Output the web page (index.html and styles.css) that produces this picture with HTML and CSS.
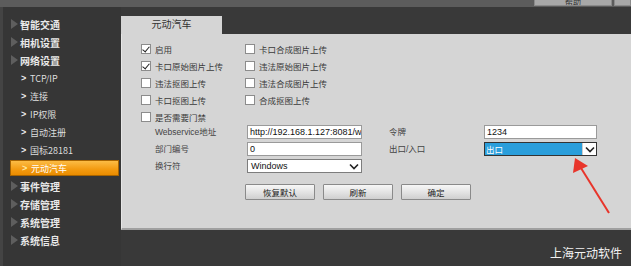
FILE: index.html
```html
<!DOCTYPE html>
<html lang="zh">
<head>
<meta charset="utf-8">
<link rel="stylesheet" href="styles.css">
</head>
<body>
<div class="page">
  <div class="topbar">
    <div class="topbtn">帮助</div>
    <div class="topbtn small"></div>
  </div>
  <div class="main">
    <nav class="sidebar">
      <div class="nav-item top"><span class="tri"></span>智能交通</div>
      <div class="nav-item top"><span class="tri"></span>相机设置</div>
      <div class="nav-item top"><span class="tri"></span>网络设置</div>
      <div class="nav-item sub"><span class="chev">&gt;</span>TCP/IP</div>
      <div class="nav-item sub"><span class="chev">&gt;</span>连接</div>
      <div class="nav-item sub"><span class="chev">&gt;</span>IP权限</div>
      <div class="nav-item sub"><span class="chev">&gt;</span>自动注册</div>
      <div class="nav-item sub"><span class="chev">&gt;</span>国标28181</div>
      <div class="nav-item sub active"><span class="chev">&gt;</span>元动汽车</div>
      <div class="nav-item top"><span class="tri"></span>事件管理</div>
      <div class="nav-item top"><span class="tri"></span>存储管理</div>
      <div class="nav-item top"><span class="tri"></span>系统管理</div>
      <div class="nav-item top"><span class="tri"></span>系统信息</div>
    </nav>
    <section class="content">
      <div class="tabs"><div class="tab">元动汽车</div></div>
      <div class="panel">
        <div class="checks">
          <label class="chk"><span class="box on"></span>启用</label>
          <label class="chk"><span class="box"></span>卡口合成图片上传</label>
          <label class="chk"><span class="box on"></span>卡口原始图片上传</label>
          <label class="chk"><span class="box"></span>违法原始图片上传</label>
          <label class="chk"><span class="box"></span>违法抠图上传</label>
          <label class="chk"><span class="box"></span>违法合成图片上传</label>
          <label class="chk"><span class="box"></span>卡口抠图上传</label>
          <label class="chk"><span class="box"></span>合成抠图上传</label>
          <label class="chk"><span class="box"></span>是否需要门禁</label>
        </div>
        <div class="form">
          <div class="lbl">Webservice地址</div>
          <div class="field">http://192.168.1.127:8081/w</div>
          <div class="lbl right">令牌</div>
          <div class="field">1234</div>
          <div class="lbl">部门编号</div>
          <div class="field">0</div>
          <div class="lbl right">出口/入口</div>
          <div class="select dark"><span class="sel-text">出口</span><span class="arrow"><svg width="10" height="7" viewBox="0 0 10 7"><path d="M1 1.5 L5 5.5 L9 1.5" fill="none" stroke="#222" stroke-width="1.6"/></svg></span></div>
          <div class="lbl">换行符</div>
          <div class="select"><span class="sel-text">Windows</span><span class="arrow"><svg width="10" height="7" viewBox="0 0 10 7"><path d="M1 1.5 L5 5.5 L9 1.5" fill="none" stroke="#222" stroke-width="1.6"/></svg></span></div>
        </div>
        <div class="buttons">
          <div class="btn">恢复默认</div>
          <div class="btn">刷新</div>
          <div class="btn">确定</div>
        </div>
      </div>
      <footer class="footer">上海元动软件</footer>
    </section>
  </div>
  <svg class="annot" width="631" height="266" viewBox="0 0 631 266">
    <line x1="609" y1="213" x2="581" y2="168" stroke="#e8352b" stroke-width="2"/>
    <polygon points="575,158 573,173 588,166" fill="#e8352b"/>
  </svg>
</div>
</body>
</html>
```

FILE: styles.css
```css
* { box-sizing: border-box; }
html, body { margin: 0; padding: 0; }
body {
  width: 631px;
  height: 266px;
  overflow: hidden;
  background: #393939;
  font-family: "Liberation Sans", Arial, "Noto Sans CJK SC", sans-serif;
  font-size: 11px;
  color: #333;
}
.page { position: relative; width: 631px; height: 266px; }
.topbar {
  height: 7px;
  background: #5c5c5c;
  display: flex;
  justify-content: flex-end;
  overflow: hidden;
}
.topbtn {
  width: 78px;
  height: 6px;
  margin-right: 2px;
  background: #a8a8a8;
  border: 1px solid #8a8a8a;
  border-top: none;
  font-family: "Noto Sans CJK SC", sans-serif;
  font-size: 8px;
  line-height: 4px;
  text-align: center;
  color: #333;
  overflow: hidden;
}
.topbtn.small { width: 17px; margin-right: 0; }
.main { display: flex; height: 259px; }
.sidebar {
  width: 121px;
  flex: none;
  padding-top: 8px;
  background: #363636;
  border-left: 3px solid #444;
}
.nav-item {
  height: 18px;
  display: flex;
  align-items: center;
  font-family: "Noto Sans CJK SC", sans-serif;
  color: #e8e8e8;
  white-space: nowrap;
}
.nav-item.top { font-size: 10px; font-weight: bold; padding-left: 8px; }
.nav-item.sub { font-size: 9px; padding-left: 18px; color: #dedede; }
.tri {
  width: 0; height: 0;
  border-top: 5px solid transparent;
  border-bottom: 5px solid transparent;
  border-left: 7px solid #5e5e5e;
  margin-right: 2px;
}
.chev {
  font-family: "Liberation Sans", sans-serif;
  font-weight: bold;
  font-size: 9px;
  width: 9px;
  color: #eee;
}
.nav-item.sub .txt { font-family: "Liberation Sans", "Noto Sans CJK SC", sans-serif; }
.nav-item.active {
  margin: 1px 2px 1px 7px;
  height: 16px;
  padding-left: 11px;
  background: linear-gradient(#fcbc45, #f39a10 60%, #ea8c00);
  border: 1px solid #a86400;
  color: #fff;
}
.nav-item.active .chev { color: #ffe9a0; }
.content { flex: 1; display: flex; flex-direction: column; }
.tabs { height: 27px; display: flex; align-items: flex-end; }
.tab {
  width: 101px;
  height: 18px;
  background: #d5d5d5;
  font-family: "Noto Sans CJK SC", sans-serif;
  font-size: 10px;
  color: #333;
  text-align: center;
  line-height: 16px;
}
.panel {
  height: 196px;
  background: #d5d5d5;
  border-left: 1px solid #e6e6e6;
  border-bottom: 2px solid #a0a0a0;
  padding: 6px 0 0 19px;
}
.checks {
  display: grid;
  grid-template-columns: 104px 160px;
  grid-auto-rows: 17px;
}
.chk {
  display: flex;
  align-items: center;
  font-family: "Noto Sans CJK SC", sans-serif;
  font-size: 8.5px;
  color: #3a3a3a;
}
.box {
  width: 10px;
  height: 10px;
  background: #fff;
  border: 1px solid #8c8c8c;
  margin-right: 4px;
  position: relative;
}
.box.on::after {
  content: "";
  position: absolute;
  left: 2px;
  top: 0px;
  width: 3px;
  height: 6px;
  border-right: 1.5px solid #222;
  border-bottom: 1.5px solid #222;
  transform: rotate(40deg);
}
.form {
  margin-left: 14px;
  display: grid;
  grid-template-columns: 92px 115px 122px 113px;
  grid-auto-rows: 14px;
  row-gap: 3px;
}
.lbl {
  font-family: "Liberation Sans", "Noto Sans CJK SC", sans-serif;
  font-size: 8.5px;
  color: #444;
  line-height: 14px;
  white-space: nowrap;
}
.lbl.right { padding-left: 27px; }
.field {
  background: #fff;
  border: 1px solid #9a9a9a;
  font-size: 9px;
  line-height: 12px;
  padding-left: 2px;
  color: #111;
  white-space: nowrap;
  overflow: hidden;
}
.select {
  display: flex;
  background: #fff;
  border: 1px solid #7d7d7d;
  font-size: 9px;
  line-height: 12px;
  color: #111;
}
.sel-text { flex: 1; padding-left: 3px; }
.arrow {
  width: 14px;
  display: flex;
  align-items: center;
  justify-content: center;
  background: #fff;
}
.select.dark { border-color: #333; }
.select.dark .sel-text {
  background: #2a9edb;
  color: #fff;
  font-family: "Noto Sans CJK SC", sans-serif;
  font-size: 8.5px;
  padding-left: 1px;
}
.select.dark .arrow { border-left: 1px solid #ccc; }
.buttons {
  display: flex;
  gap: 8px;
  margin: 11px 0 0 104px;
}
.btn {
  width: 70px;
  height: 16px;
  border: 1px solid #8a8a8a;
  border-radius: 1px;
  background: linear-gradient(#f7f7f7, #e2e2e2 55%, #cfcfcf);
  font-family: "Noto Sans CJK SC", sans-serif;
  font-size: 8.5px;
  line-height: 14px;
  text-align: center;
  color: #222;
}
.footer {
  flex: 1;
  text-align: right;
  padding: 14px 9px 0 0;
  font-family: "Noto Sans CJK SC", sans-serif;
  font-size: 12px;
  color: #f2f2f2;
}
.annot { position: absolute; left: 0; top: 0; pointer-events: none; }
```
